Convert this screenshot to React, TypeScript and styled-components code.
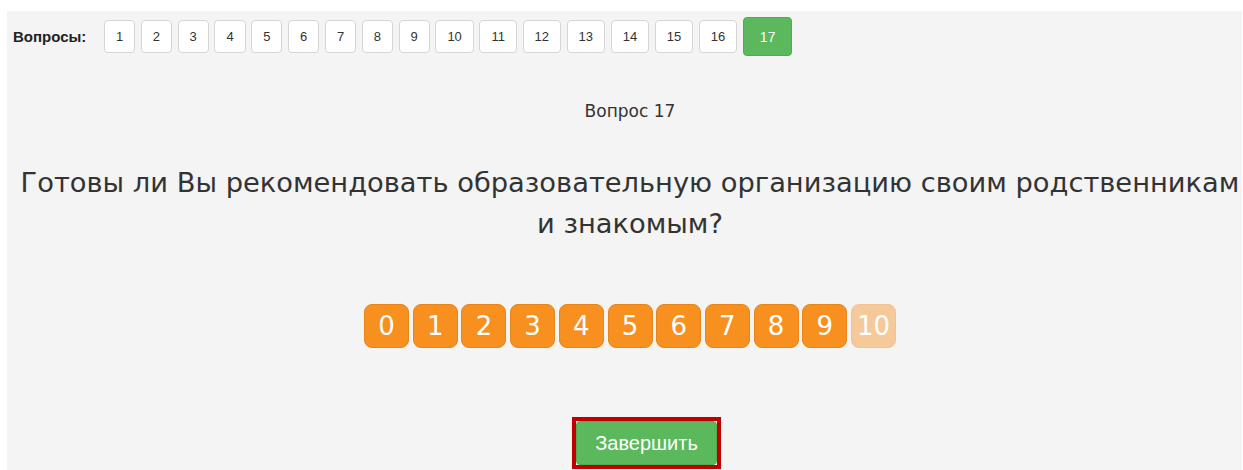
import styled, { createGlobalStyle } from 'styled-components';

const GlobalStyle = createGlobalStyle`
  html, body {
    margin: 0;
    padding: 0;
    background: #fff;
  }

  body {
    font-family: 'DejaVu Sans', Verdana, sans-serif;
    color: #333;
    overflow: hidden;
  }
`;

const Panel = styled.div`
  margin: 11px 1px 0 7px;
  min-height: 480px;
  background: #f4f4f4;
`;

const Pager = styled.nav`
  display: flex;
  align-items: center;
  gap: 5.6px;
  padding: 6px 0 0 6px;
  height: 39px;
`;

const PagerLabel = styled.span`
  margin-right: 12px;
  font-family: 'Liberation Sans', Arial, sans-serif;
  font-size: 15px;
  font-weight: 700;
  color: #222;
`;

const PageButton = styled.button<{ $active?: boolean }>`
  display: inline-flex;
  align-items: center;
  justify-content: center;
  height: ${({ $active }) => ($active ? 39 : 33)}px;
  padding: 0 ${({ $active }) => ($active ? 16 : 11)}px;
  border: 1px solid ${({ $active }) => ($active ? '#4cae4c' : '#d5d5d5')};
  border-radius: 4px;
  background: ${({ $active }) => ($active ? '#5cb85c' : '#fff')};
  color: ${({ $active }) => ($active ? '#fff' : '#333')};
  font-family: 'Liberation Sans', Arial, sans-serif;
  font-size: ${({ $active }) => ($active ? 14 : 13)}px;
  cursor: pointer;
`;

const Content = styled.main`
  display: flex;
  flex-direction: column;
  align-items: center;
  padding-left: 11px;
`;

const QuestionNumber = styled.div`
  margin-top: 46px;
  font-size: 17px;
  line-height: 19px;
  color: #333;
`;

const QuestionText = styled.h2`
  align-self: stretch;
  margin: 41px 0 0;
  font-size: 27.3px;
  font-weight: 400;
  line-height: 41px;
  text-align: center;
  white-space: nowrap;
  color: #333;
`;

const Scale = styled.div`
  display: flex;
  gap: 3.7px;
  margin-top: 60px;
`;

const ScaleButton = styled.button<{ $muted?: boolean }>`
  width: 45px;
  height: 44px;
  padding: 0;
  border: 1px solid ${({ $muted }) => ($muted ? '#f3c293' : '#e8841a')};
  border-radius: 8px;
  background: ${({ $muted }) => ($muted ? '#f6c99b' : '#f7901e')};
  color: #fff;
  font-family: 'DejaVu Sans', Verdana, sans-serif;
  font-size: 26px;
  cursor: pointer;
`;

const Footer = styled.div`
  display: flex;
  justify-content: center;
  margin-top: 69px;
  padding-left: 33px;
`;

const FinishFrame = styled.div`
  border: 4px solid #c00000;
`;

const FinishButton = styled.button`
  display: block;
  width: 141px;
  height: 44px;
  border: 1px solid #4cae4c;
  border-radius: 4px;
  background: #5cb85c;
  color: #fff;
  font-family: 'Liberation Sans', Arial, sans-serif;
  font-size: 20px;
  cursor: pointer;
`;

const pages = Array.from({ length: 17 }, (_, i) => i + 1);
const scores = Array.from({ length: 11 }, (_, i) => i);

export default function App() {
  const current = 17;

  return (
    <>
      <GlobalStyle />
      <Panel>
        <Pager>
          <PagerLabel>Вопросы:</PagerLabel>
          {pages.map((n) => (
            <PageButton key={n} $active={n === current}>
              {n}
            </PageButton>
          ))}
        </Pager>

        <Content>
          <QuestionNumber>Вопрос {current}</QuestionNumber>
          <QuestionText>
            Готовы ли Вы рекомендовать образовательную организацию своим родственникам
            <br />
            и знакомым?
          </QuestionText>

          <Scale>
            {scores.map((n) => (
              <ScaleButton key={n} $muted={n === 10}>
                {n}
              </ScaleButton>
            ))}
          </Scale>

          <Footer>
            <FinishFrame>
              <FinishButton>Завершить</FinishButton>
            </FinishFrame>
          </Footer>
        </Content>
      </Panel>
    </>
  );
}
